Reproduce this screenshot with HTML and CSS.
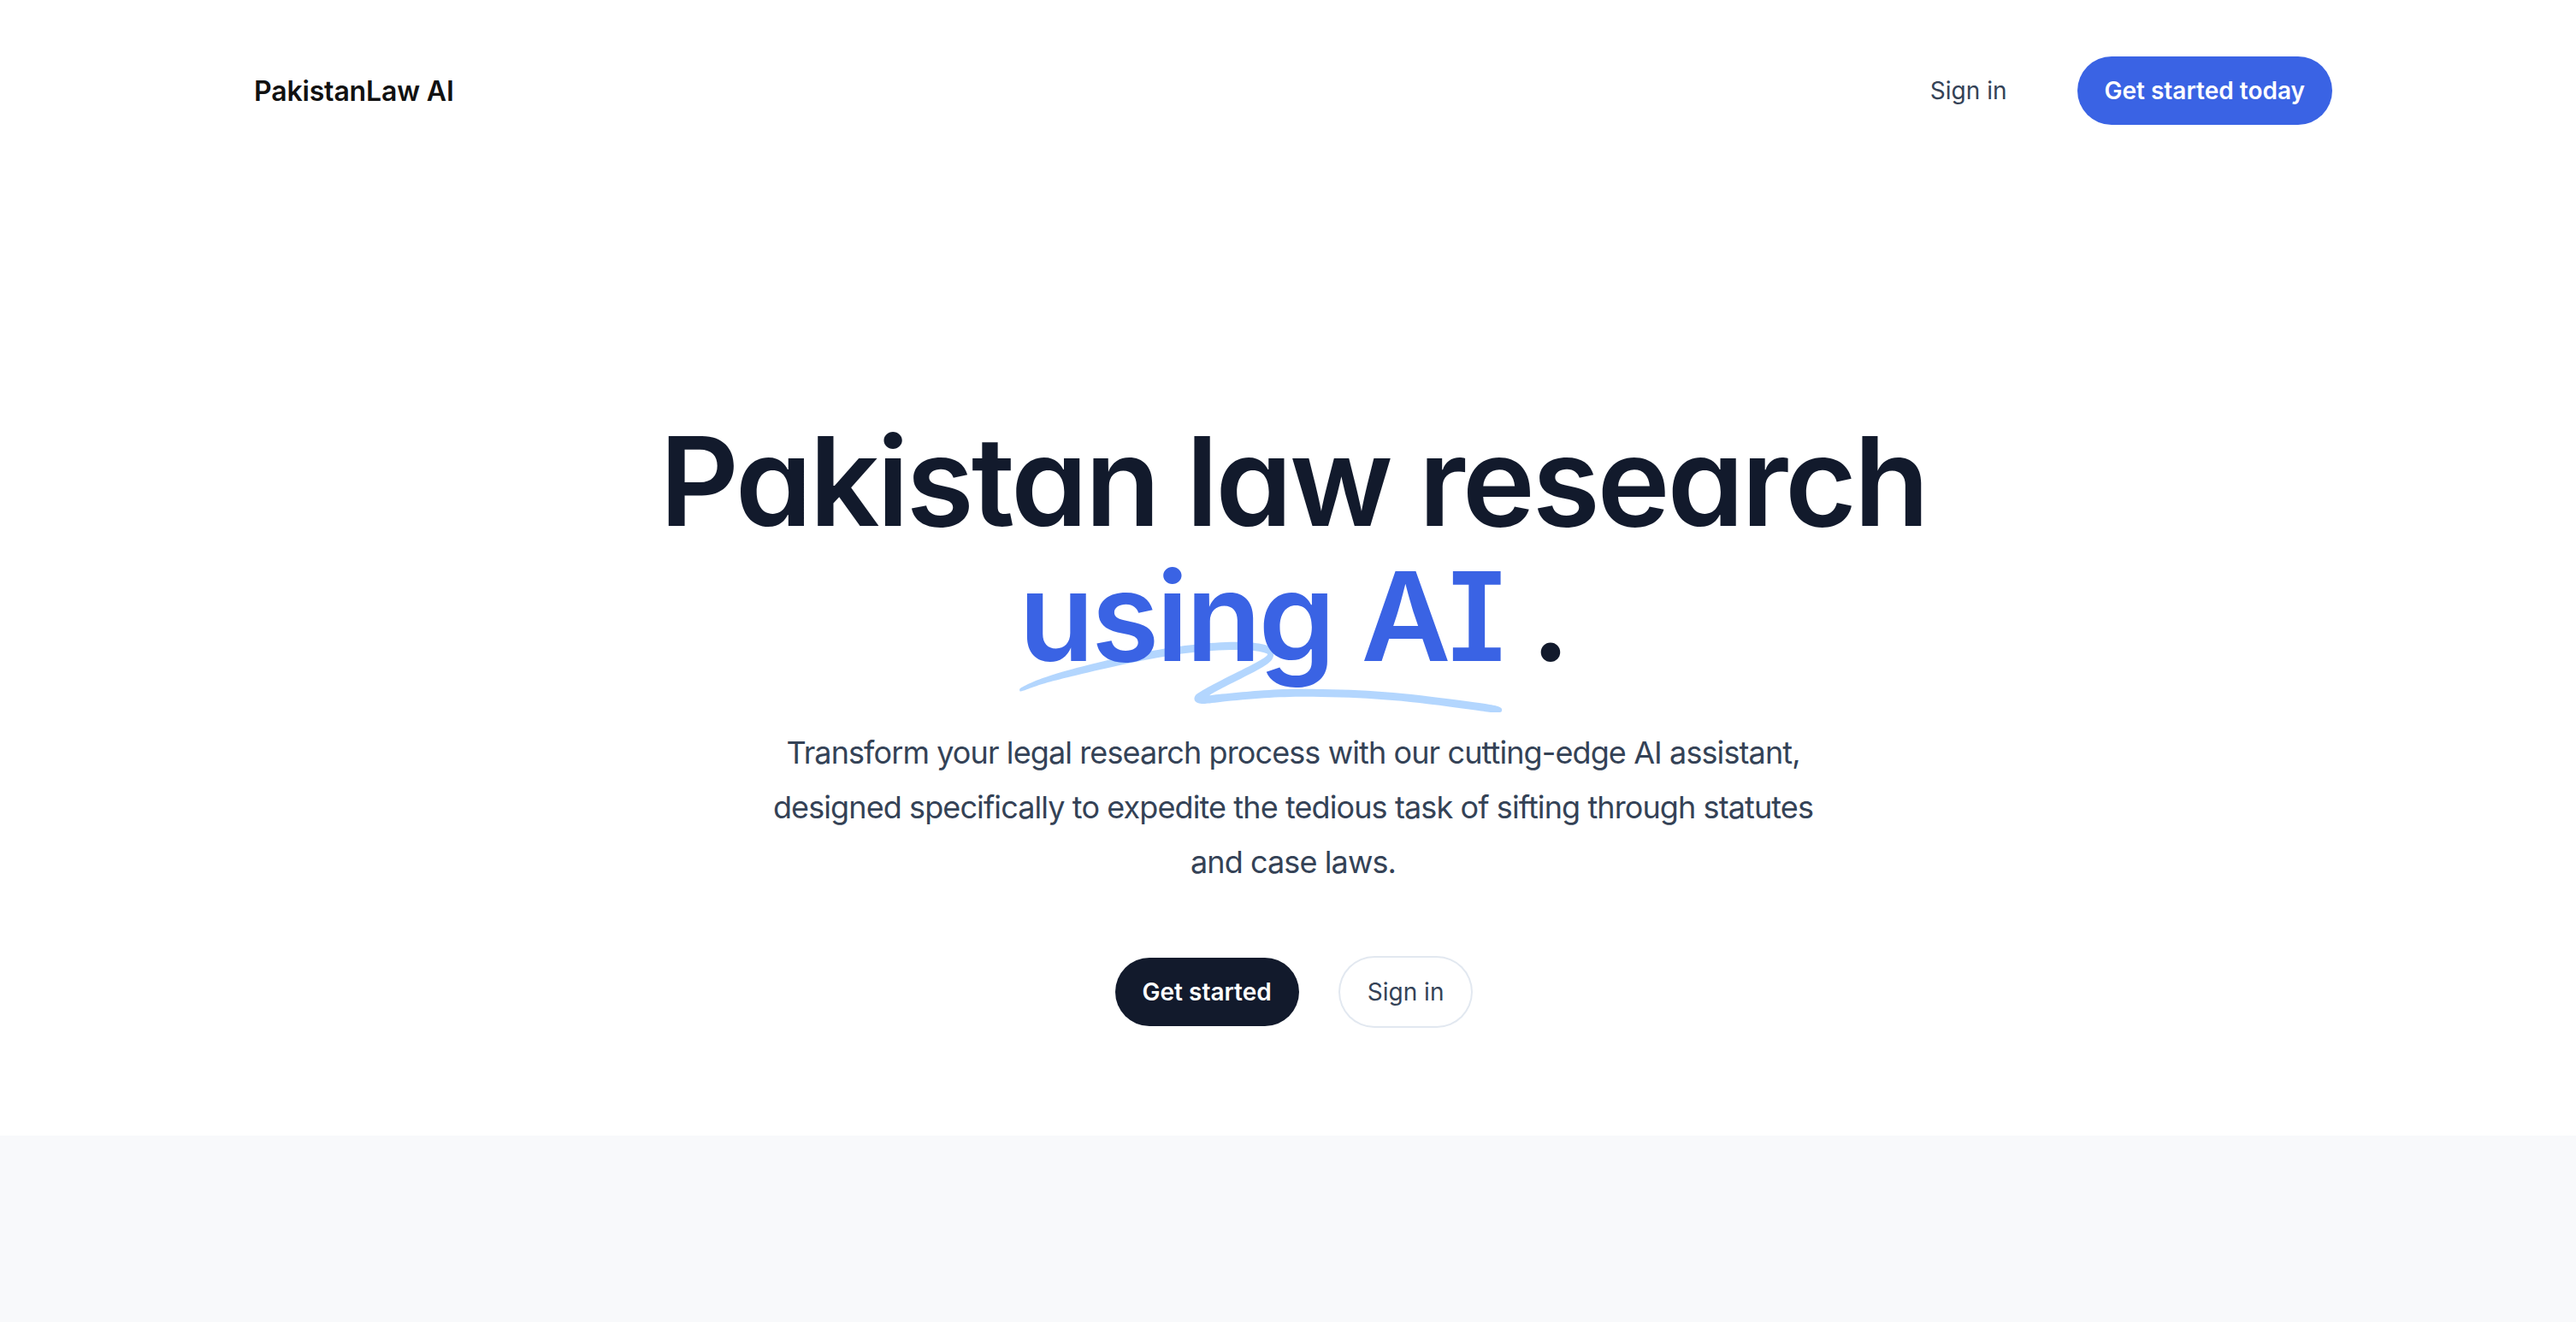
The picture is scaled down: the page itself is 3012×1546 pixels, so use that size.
FILE: index.html
```html
<!DOCTYPE html>
<html lang="en">
<head>
<meta charset="utf-8">
<title>PakistanLaw AI</title>
<link rel="stylesheet" href="styles.css">
</head>
<body>
<div class="page">
  <header class="header">
    <nav class="container nav">
      <a class="logo" href="#">PakistanLaw AI</a>
      <div class="nav-right">
        <a class="nav-link" href="#">Sign in</a>
        <a class="btn btn-blue" href="#">Get started today</a>
      </div>
    </nav>
  </header>
  <main>
    <section class="hero">
      <h1 class="title">Pakistan law research <span class="accent"><svg class="squiggle" aria-hidden="true" viewBox="0 0 418 42" preserveAspectRatio="none"><path d="M203.371.916c-26.013-2.078-76.686 1.963-124.73 9.946L67.3 12.749C35.421 18.062 18.2 21.766 6.004 25.934 1.244 27.561.828 27.778.874 28.61c.07 1.214.828 1.121 9.595-1.176 9.072-2.377 17.15-3.920 39.246-7.496C123.565 7.986 157.869 4.492 195.942 5.046c7.461.108 19.250 1.696 19.170 2.582-.107 1.183-7.874 4.310-25.750 10.366-21.992 7.450-35.430 12.534-36.701 13.884-2.173 2.308-.202 4.407 4.442 4.734 2.654.187 3.263.157 15.593-.78 35.401-2.686 57.944-3.488 88.365-3.143 46.327.526 75.721 2.230 130.788 7.584 19.787 1.924 20.814 1.980 24.557 1.332l.066-.011c1.201-.203 1.530-1.825.399-2.335-2.911-1.310-4.893-1.604-22.048-3.261-57.509-5.556-87.871-7.360-132.059-7.842-23.239-.254-33.617-.116-50.627.674-11.629.540-42.371 2.494-46.696 2.967-2.359.259 8.133-3.625 26.504-9.810 23.239-7.825 27.934-10.149 28.304-14.005.417-4.348-3.529-6-16.878-7.066Z"/></svg><span class="accent-text">using AI</span></span> .</h1>
      <p class="lead">Transform your legal research process with our cutting-edge AI assistant, designed specifically to expedite the tedious task of sifting through statutes and case laws.</p>
      <div class="actions">
        <a class="btn btn-dark" href="#">Get started</a>
        <a class="btn btn-outline" href="#">Sign in</a>
      </div>
    </section>
    <section class="features"></section>
  </main>
</div>
</body>
</html>
```
FILE: styles.css
```css
html, body {
  margin: 0;
  padding: 0;
  overflow: hidden;
  background: #ffffff;
}

.page {
  width: 3024px;
  font-family: Inter, "Liberation Sans", sans-serif;
  color: #0f172a;
}

a {
  text-decoration: none;
}

.container {
  width: 2430px;
  margin: 0 auto;
}

.header {
  padding: 66px 0 82px;
}

.nav {
  display: flex;
  align-items: center;
  justify-content: space-between;
  height: 80px;
}

.logo {
  font-size: 32px;
  font-weight: 600;
  color: #111111;
  letter-spacing: -0.005em;
}

.nav-right {
  display: flex;
  align-items: center;
  gap: 66px;
}

.nav-link {
  font-size: 28px;
  color: #344256;
  padding: 8px 16px;
}

.btn {
  display: inline-flex;
  align-items: center;
  justify-content: center;
  height: 80px;
  box-sizing: border-box;
  padding: 0 32px;
  border-radius: 999px;
  font-size: 28px;
  line-height: 40px;
}

.btn-blue {
  background: #3a63e4;
  color: #ffffff;
  font-weight: 600;
}

.btn-dark {
  background: #121a2c;
  color: #ffffff;
  font-weight: 600;
}

.btn-outline {
  color: #344256;
  box-shadow: 0 0 0 2px #e2e8f0;
}

.hero {
  padding: 256px 0 128px;
  text-align: center;
}

.title {
  margin: 0 auto;
  max-width: 1792px;
  font-size: 144px;
  line-height: 158px;
  font-weight: 600;
  letter-spacing: -0.022em;
  color: #121a2c;
  font-feature-settings: "cv11" 1, "cv08" 1;
}

.accent {
  position: relative;
  white-space: nowrap;
  color: #3a63e4;
}

.squiggle {
  position: absolute;
  left: 0;
  top: 66.6667%;
  width: 100%;
  height: 0.58em;
  fill: rgba(147, 197, 253, 0.7);
}

.accent-text {
  position: relative;
}

.lead {
  margin: 48px auto 0;
  max-width: 1260px;
  font-size: 36px;
  line-height: 64px;
  letter-spacing: -0.025em;
  color: #344256;
}

.actions {
  margin-top: 80px;
  display: flex;
  justify-content: center;
  gap: 48px;
}

.features {
  background: #f8f9fb;
  height: 219px;
}
```
